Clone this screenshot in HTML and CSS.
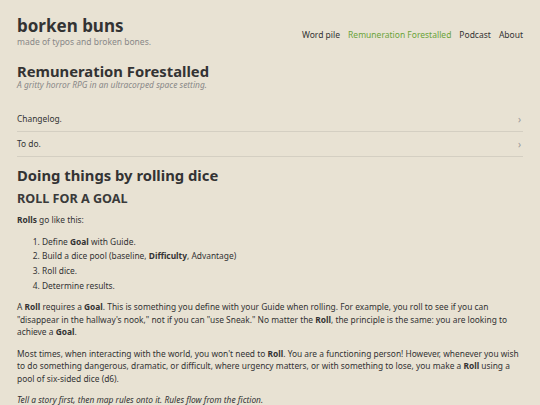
FILE: index.html
```html
<!DOCTYPE html>
<html lang="en">

<head>
    <meta charset="UTF-8">
    <meta name="viewport" content="width=device-width, initial-scale=1.0">
    <title>Remuneration Forestalled - borken buns</title>
    <link rel="stylesheet" href="styles.css">
</head>

<body>
    <header class="site-header">
        <div class="brand">
            <div class="site-title">borken buns</div>
            <div class="site-tagline">made of typos and broken bones.</div>
        </div>
        <nav class="site-nav">
            <a href="#">Word pile</a>
            <a href="#" class="active">Remuneration Forestalled</a>
            <a href="#">Podcast</a>
            <a href="#">About</a>
        </nav>
    </header>

    <main class="page">
        <h1 class="page-title">Remuneration Forestalled</h1>
        <p class="page-sub">A gritty horror RPG in an ultracorped space setting.</p>

        <ul class="toggles">
            <li class="toggle"><span>Changelog.</span><span class="chev">›</span></li>
            <li class="toggle"><span>To do.</span><span class="chev">›</span></li>
        </ul>

        <h2>Doing things by rolling dice</h2>
        <h3>ROLL FOR A GOAL</h3>

        <p><b>Rolls</b> go like this:</p>
        <ol>
            <li>Define <b>Goal</b> with Guide.</li>
            <li>Build a dice pool (baseline, <b>Difficulty</b>, Advantage)</li>
            <li>Roll dice.</li>
            <li>Determine results.</li>
        </ol>

        <p>A <b>Roll</b> requires a <b>Goal</b>. This is something you define with your Guide when rolling. For example, you roll to see if you can "disappear in the hallway's nook," not if you can "use Sneak." No matter the <b>Roll</b>, the principle is the same: you are looking to achieve a <b>Goal</b>.</p>

        <p>Most times, when interacting with the world, you won't need to <b>Roll</b>. You are a functioning person! However, whenever you wish to do something dangerous, dramatic, or difficult, where urgency matters, or with something to lose, you make a <b>Roll</b> using a pool of six-sided dice (d6).</p>

        <p><i>Tell a story first, then map rules onto it. Rules flow from the fiction.</i></p>
    </main>
</body>

</html>
```

FILE: styles.css
```css
* {
    box-sizing: border-box;
}

body {
    margin: 0;
    padding: 0 17px;
    background: #e8e2d3;
    color: #333;
    font-family: "Noto Sans", "Open Sans", sans-serif;
    font-size: 8.4px;
    line-height: 12.5px;
}

a {
    color: inherit;
    text-decoration: none;
}

.site-header {
    display: flex;
    justify-content: space-between;
    align-items: flex-start;
    padding-top: 15px;
}

.site-title {
    font-size: 17px;
    font-weight: 700;
    line-height: 22px;
    color: #333;
}

.site-tagline {
    font-size: 8.5px;
    line-height: 9px;
    color: #888;
}

.site-nav {
    display: flex;
    gap: 8px;
    padding-top: 14px;
    font-size: 8.5px;
    line-height: 12px;
    color: #333;
}

.site-nav .active {
    color: #6aa33a;
}

.page-title {
    margin: 16px 0 0;
    font-size: 14.8px;
    line-height: 18px;
}

.page-sub {
    margin: 0 0 18px;
    font-size: 8.4px;
    line-height: 9px;
    font-style: italic;
    color: #888;
}

.toggles {
    list-style: none;
    margin: 0;
    padding: 0;
}

.toggle {
    display: flex;
    justify-content: space-between;
    align-items: center;
    padding: 6px 0;
    line-height: 12px;
    border-bottom: 1px solid #d4cfc2;
}

.chev {
    color: #999;
    font-size: 10px;
    padding-right: 2px;
}

h2 {
    margin: 8px 0 0;
    font-size: 14.8px;
    line-height: 20px;
}

h3 {
    margin: 5px 0 6px;
    font-size: 12.6px;
    line-height: 18px;
    color: #3a3a3a;
}

p {
    margin: 0 0 9px;
}

ol {
    margin: 0 0 9px;
    padding-left: 25px;
}

ol li {
    margin-bottom: 2.2px;
}
```
